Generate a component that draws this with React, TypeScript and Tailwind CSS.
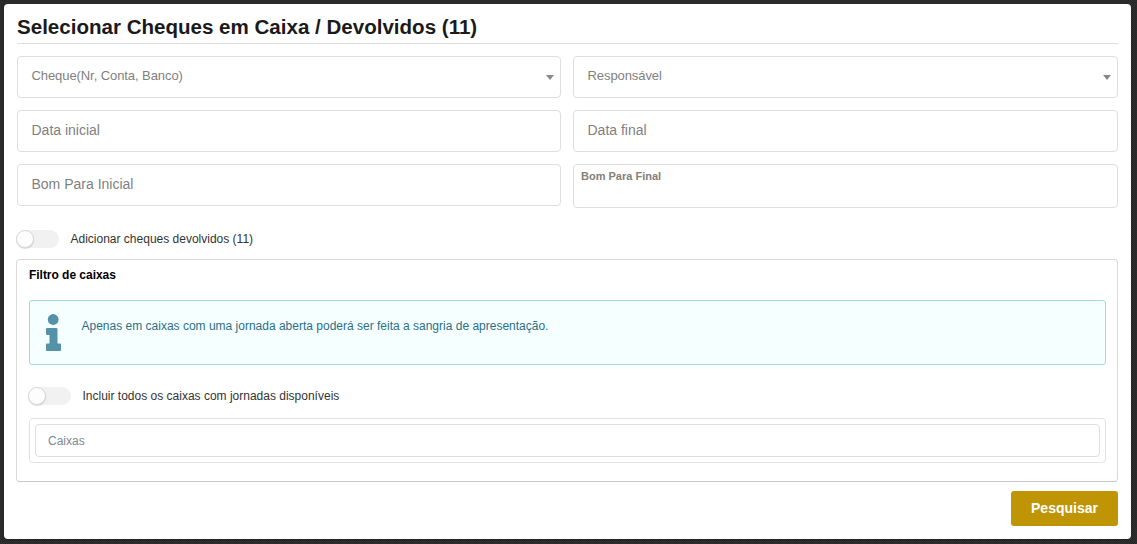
import React from "react"

const font = "font-['Liberation_Sans',Arial,sans-serif]"

const Field = ({ label, arrow, className }: { label: string; arrow?: boolean; className?: string }) => {
  return (
    <div className={`h-[42px] flex items-center justify-between rounded-[4px] border border-[#dedede] bg-white pl-[13.5px] pr-[6px] ${className ?? ""}`}>
      <span className={`text-[#7f7f7f] ${arrow ? "text-[13px] tracking-[-0.08px] -mt-[2px]" : "text-[14px] -mt-[2px]"}`}>{label}</span>
      {arrow && <span className="w-0 h-0 border-x-[4px] border-x-transparent border-t-[5px] border-t-[#888888]"></span>}
    </div>
  )
}

const Toggle = ({ label }: { label: string }) => {
  return (
    <div className="flex items-center gap-3 h-[18px]">
      <div className="relative w-[42px] h-[18px] rounded-full bg-[#f1f1f1]">
        <div className="absolute -left-px top-0 w-[18px] h-[18px] rounded-full bg-[#fdfdfd] border border-[#d8d8d8] shadow-[0_1px_1px_rgba(0,0,0,0.15)]"></div>
      </div>
      <span className="text-[12px] text-[#333333] -ml-[0.5px]">{label}</span>
    </div>
  )
}

export default function App() {
  return (
    <div className={`h-screen bg-[#2b2b2b] bg-[repeating-conic-gradient(#303030_0_25%,#262626_0_50%)] bg-[length:2px_2px] pt-[4px] pl-[4px] pr-[6px] pb-[5px] ${font}`}>
      <div className="h-full bg-white rounded-[4px] pt-[12px] pl-[13px] pr-[13px] shadow-sm">
        <h2 className="text-[20.55px] leading-[22px] font-bold text-[#1a1a1a] mb-[5px]">
          Selecionar Cheques em Caixa / Devolvidos (11)
        </h2>
        <div className="h-px bg-[#dddddd] mb-[12px]"></div>

        <div className="grid grid-cols-[544px_545px] gap-x-[12px] gap-y-[12px] items-start">
          <Field label="Cheque(Nr, Conta, Banco)" arrow />
          <Field label="Responsável" arrow />
          <Field label="Data inicial" />
          <Field label="Data final" />
          <Field label="Bom Para Inicial" />
          <div className="h-[44px] rounded-[4px] border border-[#dedede] bg-white pl-[7px] pt-[4px]">
            <span className="block text-[11px] leading-[14px] font-bold text-[#85807a]">Bom Para Final</span>
          </div>
        </div>

        <div className="mt-[22px]">
          <Toggle label="Adicionar cheques devolvidos (11)" />
        </div>

        <div className="mt-[11px] w-[1102px] -ml-px h-[223px] rounded-[4px] border border-[#d9d9d9] border-b-[#c8c8c8] pl-[12px] pr-[11px] pt-[8px]">
          <div className="text-[12px] leading-[14px] font-bold text-black tracking-[-0.03px]">Filtro de caixas</div>

          <div className="mt-[18px] h-[65px] flex items-start rounded-[3px] border border-[#a5d8dd] bg-[#f6ffff] pl-[16px] pt-[13px]">
            <svg width="15" height="37" viewBox="0 0 15 37" className="shrink-0" fill="#5492a8">
              <circle cx="7.2" cy="5.5" r="5.4" />
              <path d="M1 14h9.500a1 1 0 0 1 1 1v14.500H14a1 1 0 0 1 1 1V36a1 1 0 0 1-1 1H1a1 1 0 0 1-1-1v-5.500a1 1 0 0 1 1-1h2.500V21H1a1 1 0 0 1-1-1v-5a1 1 0 0 1 1-1z" />
            </svg>
            <span className="ml-[21px] text-[12px] leading-[14px] mt-[5px] -translate-x-[0.5px] text-[#2a6f87]">
              Apenas em caixas com uma jornada aberta poderá ser feita a sangria de apresentação.
            </span>
          </div>

          <div className="mt-[22px]">
            <Toggle label="Incluir todos os caixas com jornadas disponíveis" />
          </div>

          <div className="mt-[13px] h-[45px] rounded-[4px] border border-[#e2e2e2] p-[5px]">
            <div className="h-[33px] flex items-center rounded-[4px] border border-[#dedede] pl-[12px]">
              <span className="text-[12px] text-[#7f8790]">Caixas</span>
            </div>
          </div>
        </div>

        <div className="mt-[9px] flex justify-end">
          <button className="w-[107px] h-[35px] rounded-[3px] bg-[#bf9505] text-white text-[14px] font-bold">
            Pesquisar
          </button>
        </div>
      </div>
    </div>
  )
}
